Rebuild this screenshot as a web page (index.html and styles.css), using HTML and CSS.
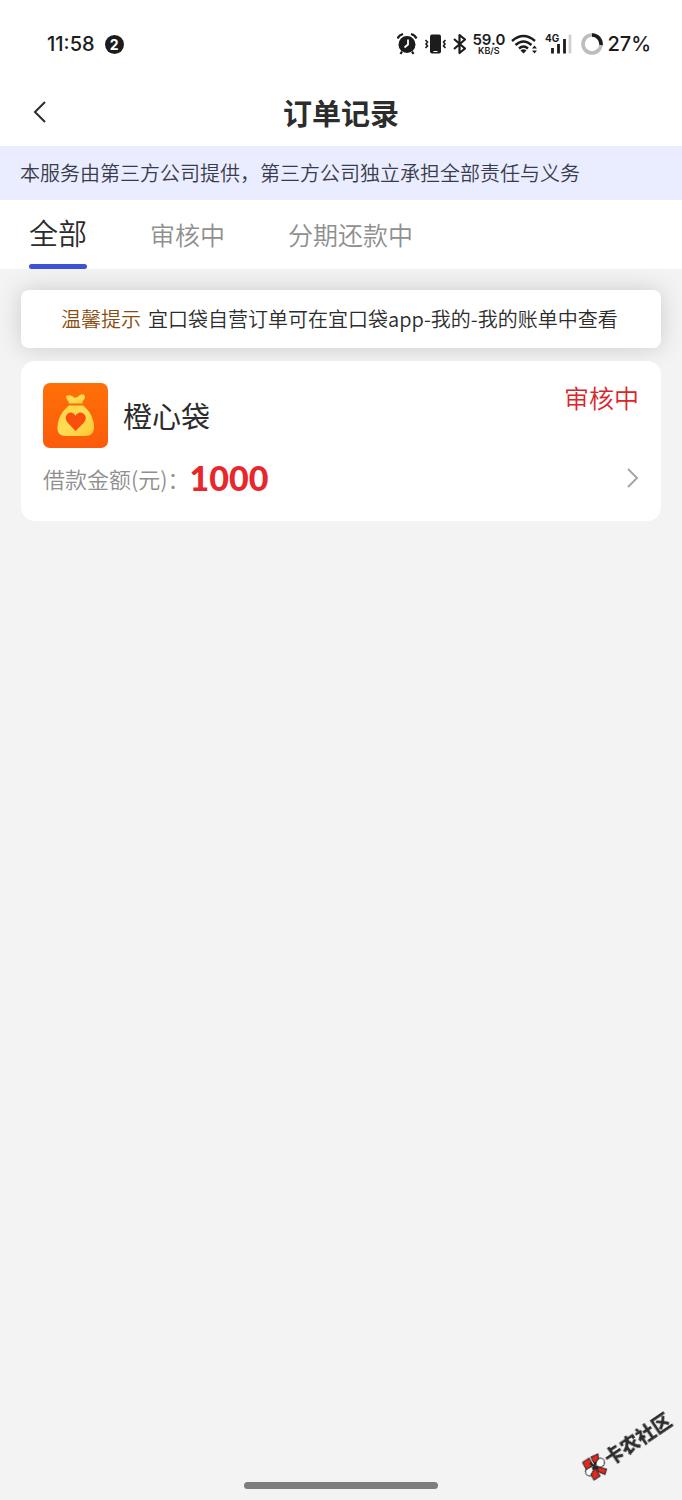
FILE: index.html
```html
<!DOCTYPE html>
<html lang="zh-CN">
<head>
    <meta charset="UTF-8">
    <meta name="viewport" content="width=device-width, initial-scale=1.0">
    <title>订单记录</title>
    <link rel="stylesheet" href="styles.css">
</head>
<body>
    <div class="status-bar">
        <div class="status-left">
            <span>11:58</span>
            <span class="status-count">2</span>
        </div>
        <div class="status-right">
            <svg width="22" height="24" viewBox="0 0 22 24">
                <circle cx="10" cy="12.500" r="8.500" fill="#1c1c1c"/>
                <path d="M0.500 6.500Q2 3 6 2M19.500 6.500Q18 3 14 2M5 19.500L3.500 22M15 19.500L16.500 22" fill="none" stroke="#1c1c1c" stroke-width="2.200"/>
                <path d="M11 7.500V12.500L7.500 15.500" fill="none" stroke="#fff" stroke-width="1.800"/>
            </svg>
            <svg width="21" height="24" viewBox="0 0 21 24">
                <rect x="5" y="2.500" width="11" height="19" rx="2" fill="#1c1c1c"/>
                <path d="M8.500 19.500H12.500" stroke="#fff" stroke-width="1"/>
                <path d="M0.500 8L2.500 10L1 12L2.500 14L0.500 16M20.500 8L18.500 10L20 12L18.500 14L20.500 16" fill="none" stroke="#1c1c1c" stroke-width="1.600"/>
            </svg>
            <svg width="14" height="24" viewBox="0 0 14 24">
                <path d="M2 7L13 16.500L7.500 21V3L13 7.500L2 17" fill="none" stroke="#1c1c1c" stroke-width="2.200" stroke-linejoin="round"/>
            </svg>
            <div class="net-speed">
                <span class="net-value">59.0</span>
                <span class="net-unit">KB/S</span>
            </div>
            <svg width="28" height="24" viewBox="0 0 28 24">
                <path d="M1 9Q12.500 -1 24 9M4.500 13Q12.500 6 20.500 13M8 16.500Q12.500 12.500 17 16.500" fill="none" stroke="#1c1c1c" stroke-width="2.400"/>
                <path d="M9.500 18.500Q12.500 16 15.500 18.500L12.500 21.500Z" fill="#1c1c1c"/>
                <path d="M21 16.500L23.500 13.500L26 16.500ZM21 18.500L23.500 21.500L26 18.500Z" fill="#1c1c1c"/>
            </svg>
            <svg width="30" height="24" viewBox="0 0 30 24">
                <text class="net-type" x="0" y="10">4G</text>
                <path d="M7.500 16V21.500M13.500 12V21.500M19.500 7V21.500" stroke="#1c1c1c" stroke-width="2.800"/>
                <path d="M25 2.500V21.500" stroke="#d2d2d2" stroke-width="2.800"/>
            </svg>
            <div class="battery">
                <svg width="22" height="24" viewBox="0 0 22 24">
                    <circle cx="11" cy="12" r="9" fill="none" stroke="#bdbdbd" stroke-width="3.600"/>
                    <path d="M11 3A9 9 0 0 1 20 13" fill="none" stroke="#1c1c1c" stroke-width="3.600"/>
                </svg>
                <span>27%</span>
            </div>
        </div>
    </div>

    <header class="header">
        <button class="back-btn" aria-label="返回">
            <svg width="16" height="24" viewBox="0 0 16 24" fill="none" stroke="#2c2c2c" stroke-width="2">
                <polyline points="13 2 3 12 13 22"></polyline>
            </svg>
        </button>
        <h1 class="title">订单记录</h1>
    </header>

    <p class="notice">本服务由第三方公司提供，第三方公司独立承担全部责任与义务</p>

    <nav class="tabs">
        <button class="tab active">全部</button>
        <button class="tab">审核中</button>
        <button class="tab">分期还款中</button>
    </nav>

    <main class="content">
        <p class="tips"><span class="tips-label">温馨提示</span>宜口袋自营订单可在宜口袋app-我的-我的账单中查看</p>

        <section class="order">
            <div class="order-top">
                <svg class="order-logo" width="65" height="65" viewBox="0 0 65 65">
                    <defs>
                        <linearGradient id="logoBg" x1="0" y1="0" x2="0" y2="1">
                            <stop offset="0" stop-color="#ff7008"/>
                            <stop offset="1" stop-color="#fb5b0c"/>
                        </linearGradient>
                        <linearGradient id="bag" x1="0" y1="0" x2="1" y2="1">
                            <stop offset="0" stop-color="#ffd23c"/>
                            <stop offset="0.5" stop-color="#ffdd55"/>
                            <stop offset="1" stop-color="#fdc62e"/>
                        </linearGradient>
                    </defs>
                    <rect width="65" height="65" rx="7" fill="url(#logoBg)"/>
                    <path d="M23 13C26 11.500 29 12.500 31 14.500C33 15 35 14 37 12C39 10.500 42 11.500 42 14C42 16.500 39.500 17 39.500 20.500H26C26 18 23 16.500 23 13Z" fill="url(#bag)"/>
                    <path d="M26 22.500H40C47 28 51 36 51 44C51 50 48 53 42 53H23C17 53 14 50 14.500 44C15 35 19 28 26 22.500Z" fill="url(#bag)"/>
                    <path d="M32.500 48L24.500 39.500C20 34 25 28 29.500 30Q32 31 32.500 33Q33 31 35.500 30C40 28 46 34 41 39.500Z" fill="#fb4e0c"/>
                </svg>
                <h2 class="order-name">橙心袋</h2>
                <span class="order-status">审核中</span>
            </div>
            <div class="order-bottom">
                <span class="amount-label">借款金额(元)：</span>
                <span class="amount">1000</span>
                <button class="detail-btn" aria-label="查看详情">
                    <svg width="14" height="22" viewBox="0 0 14 22" fill="none" stroke="#a6a6a6" stroke-width="2">
                        <polyline points="3 2 12 11 3 20"></polyline>
                    </svg>
                </button>
            </div>
        </section>
    </main>

    <div class="home-bar"></div>

    <div class="watermark">
        <svg class="watermark-logo" width="26" height="30" viewBox="0 0 26 30" stroke="#222" stroke-width="1">
            <circle cx="18" cy="10.500" r="4.500" fill="#fff"/>
            <circle cx="8" cy="19.500" r="4.500" fill="#fff"/>
            <path d="M0.500 10.500L7 6L11 13L4.500 17.500Z" fill="#e8281e"/>
            <path d="M9 5L16 2L16.500 7L12.500 12Z" fill="#e8281e"/>
            <path d="M13 16L18 24L12 28L9 22.500Z" fill="#e8281e"/>
            <path d="M14 14.500L24.500 17L23 22.500L17 20Z" fill="#e8281e"/>
            <path d="M8 11L16 17M14 10L11 18" stroke-width="2"/>
        </svg>
        <span>卡农社区</span>
    </div>
</body>
</html>
```

FILE: styles.css
```css
* {
    margin: 0;
    padding: 0;
    box-sizing: border-box;
}

body {
    min-height: 100vh;
    display: flex;
    flex-direction: column;
    font-family: "Noto Sans CJK SC", sans-serif;
    font-weight: 350;
    color: #2c2c2c;
    background-color: #f3f3f3;
    overflow-x: hidden;
}

button {
    border: none;
    background: none;
    font: inherit;
    color: inherit;
    cursor: pointer;
}

svg {
    display: block;
    flex-shrink: 0;
}

.status-bar {
    height: 78px;
    padding: 10px 31px 0 47px;
    display: flex;
    align-items: center;
    justify-content: space-between;
    background-color: #fff;
    font-family: Inter, sans-serif;
    font-size: 20px;
    font-weight: 500;
    line-height: 24px;
    color: #1c1c1c;
}

.status-left {
    display: flex;
    align-items: center;
    gap: 10px;
}

.status-count {
    width: 19px;
    height: 19px;
    border-radius: 50%;
    background-color: #1c1c1c;
    color: #fff;
    font-size: 14px;
    font-weight: 700;
    line-height: 19px;
    text-align: center;
}

.status-right {
    display: flex;
    align-items: center;
    gap: 6px;
}

.net-speed {
    width: 33px;
    display: flex;
    flex-direction: column;
    align-items: center;
    font-weight: 600;
}

.net-value {
    font-size: 15px;
    line-height: 13px;
}

.net-unit {
    font-size: 9px;
    line-height: 9px;
}

.net-type {
    font-size: 10px;
    font-weight: 700;
    fill: #1c1c1c;
}

.battery {
    display: flex;
    align-items: center;
    gap: 4px;
}

.header {
    height: 68px;
    padding: 0 32px;
    display: grid;
    grid-template-columns: 1fr auto 1fr;
    align-items: center;
    background-color: #fff;
}

.back-btn {
    justify-self: start;
}

.title {
    font-size: 29px;
    font-weight: 700;
    line-height: 40px;
}

.notice {
    padding: 12px 20px;
    background-color: #e9edff;
    color: #3a3b4a;
    font-size: 20px;
    line-height: 30px;
}

.tabs {
    height: 69px;
    padding: 0 29px;
    display: flex;
    gap: 63px;
    background-color: #fff;
    color: #8f8f8f;
}

.tab {
    padding-bottom: 2px;
    font-size: 25px;
    line-height: 40px;
}

.tab.active {
    display: flex;
    flex-direction: column;
    justify-content: space-between;
    padding: 12px 0 0;
    font-size: 29px;
    color: #2c2c2c;
}

.tab.active::after {
    content: "";
    width: 100%;
    height: 5px;
    border-radius: 3px;
    background-color: #3d52d5;
}

.content {
    padding: 21px;
    display: flex;
    flex-direction: column;
    gap: 13px;
}

.tips {
    padding: 14px 40px;
    border-radius: 8px;
    background-color: #fff;
    box-shadow: 0 0 24px rgba(0, 0, 0, 0.16);
    font-size: 20px;
    line-height: 30px;
    white-space: nowrap;
}

.tips-label {
    margin-right: 7px;
    color: #8a4b0f;
}

.order {
    position: relative;
    padding: 22px;
    display: flex;
    flex-direction: column;
    gap: 8px;
    border-radius: 14px;
    background-color: #fff;
}

.order-top {
    display: flex;
    align-items: flex-start;
    gap: 15px;
}

.order-name {
    flex: 1;
    font-size: 29px;
    font-weight: 400;
    line-height: 64px;
}

.order-status {
    font-size: 25px;
    line-height: 28px;
    color: #d9262b;
}

.order-bottom {
    height: 43px;
    display: flex;
    align-items: center;
}

.amount-label {
    font-size: 22px;
    line-height: 30px;
    color: #8f8f8f;
}

.amount {
    font-family: Lato, sans-serif;
    font-size: 34px;
    font-weight: 900;
    line-height: 43px;
    color: #e8272c;
}

.detail-btn {
    margin-left: auto;
}

.home-bar {
    width: 194px;
    height: 7px;
    margin: auto auto 11px;
    border-radius: 4px;
    background-color: #7d7d7d;
}

.watermark {
    position: fixed;
    right: -2px;
    bottom: 18px;
    display: flex;
    align-items: center;
    font-size: 19px;
    font-weight: 900;
    line-height: 30px;
    transform: rotate(-34deg);
    transform-origin: 13px 50%;
}

.watermark-logo {
    transform: rotate(34deg);
}
```
